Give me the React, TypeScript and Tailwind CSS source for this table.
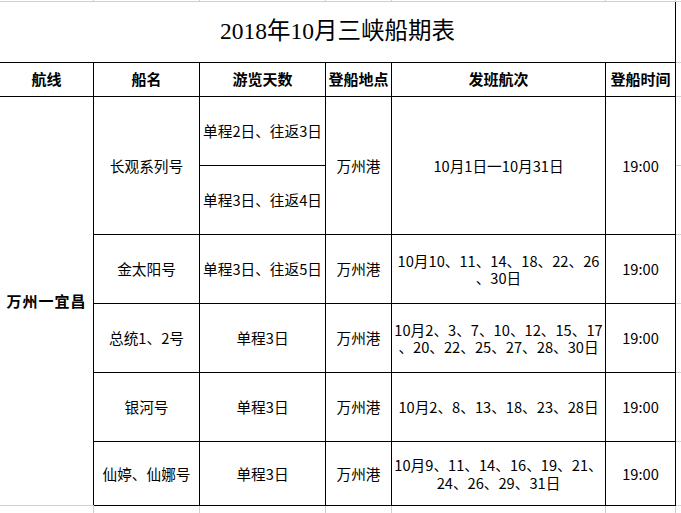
import React from "react";

const G = "border-[#d0d0d0]";
const body = "flex items-center justify-center text-center text-[14.67px] text-black whitespace-nowrap";
const cellB = "border-r border-b border-black";

function Lines({ lines }: { lines: string[] }) {
  return (
    <div className="flex flex-col items-center">
      {lines.map((l, i) => (
        <span key={i} className="block h-[17.5px] leading-[17.5px]">{l}</span>
      ))}
    </div>
  );
}

export default function App() {
  return (
    <div
      className="w-[681px] h-[513px] bg-white overflow-hidden"
      style={{ fontFamily: '"Noto Sans CJK SC", "Noto Sans", sans-serif' }}
    >
      <div className="grid grid-cols-[94px_106px_126px_66px_214px_70px_5px] grid-rows-[2px_61px_34px_69px_69px_69px_69px_69px_64px_7px]">
        {/* top strip */}
        <div className={`col-start-1 row-start-1 border-r border-b ${G}`} />
        <div className={`col-start-2 row-start-1 border-r border-b ${G}`} />
        <div className={`col-start-3 row-start-1 border-r border-b ${G}`} />
        <div className={`col-start-4 row-start-1 border-r border-b ${G}`} />
        <div className={`col-start-5 row-start-1 border-r border-b ${G}`} />
        <div className={`col-start-6 row-start-1 border-r border-b ${G}`} />
        <div className={`col-start-7 row-start-1 border-b ${G}`} />

        {/* title */}
        <div
          className={`col-start-1 col-span-6 row-start-2 ${cellB} flex items-center justify-center text-[23.5px] text-black`}
          style={{ fontFamily: '"Liberation Serif", "Noto Sans CJK SC", serif' }}
        >
          2018年10月三峡船期表
        </div>
        <div className={`col-start-7 row-start-2 border-b ${G}`} />

        {/* header */}
        {["航线", "船名", "游览天数", "登船地点", "发班航次", "登船时间"].map((h, i) => (
          <div
            key={h}
            className={`row-start-3 ${cellB} flex items-center justify-center text-[15px] font-bold text-black whitespace-nowrap`}
            style={{ gridColumnStart: i + 1 }}
          >
            {h}
          </div>
        ))}
        <div className={`col-start-7 row-start-3 border-b ${G}`} />

        {/* route merged */}
        <div
          className={`col-start-1 row-start-4 row-span-6 border-r border-black border-b-0 flex items-center justify-center text-[15px] font-bold tracking-[1px] text-black`}
        >
          万州一宜昌
        </div>

        {/* row 1 */}
        <div className={`col-start-2 row-start-4 row-span-2 ${cellB} ${body}`}>长观系列号</div>
        <div className={`col-start-3 row-start-4 ${cellB} ${body}`}>单程2日、往返3日</div>
        <div className={`col-start-3 row-start-5 ${cellB} ${body}`}>单程3日、往返4日</div>
        <div className={`col-start-4 row-start-4 row-span-2 ${cellB} ${body}`}>万州港</div>
        <div className={`col-start-5 row-start-4 row-span-2 ${cellB} ${body}`}>10月1日一10月31日</div>
        <div className={`col-start-6 row-start-4 row-span-2 ${cellB} ${body}`}>19:00</div>
        <div className={`col-start-7 row-start-4 border-b ${G}`} />
        <div className={`col-start-7 row-start-5 border-b ${G}`} />

        {/* row 2 */}
        <div className={`col-start-2 row-start-6 ${cellB} ${body}`}>金太阳号</div>
        <div className={`col-start-3 row-start-6 ${cellB} ${body}`}>单程3日、往返5日</div>
        <div className={`col-start-4 row-start-6 ${cellB} ${body}`}>万州港</div>
        <div className={`col-start-5 row-start-6 ${cellB} ${body}`}>
          <Lines lines={["10月10、11、14、18、22、26", "、30日"]} />
        </div>
        <div className={`col-start-6 row-start-6 ${cellB} ${body}`}>19:00</div>
        <div className={`col-start-7 row-start-6 border-b ${G}`} />

        {/* row 3 */}
        <div className={`col-start-2 row-start-7 ${cellB} ${body}`}>总统1、2号</div>
        <div className={`col-start-3 row-start-7 ${cellB} ${body}`}>单程3日</div>
        <div className={`col-start-4 row-start-7 ${cellB} ${body}`}>万州港</div>
        <div className={`col-start-5 row-start-7 ${cellB} ${body}`}>
          <Lines lines={["10月2、3、7、10、12、15、17", "、20、22、25、27、28、30日"]} />
        </div>
        <div className={`col-start-6 row-start-7 ${cellB} ${body}`}>19:00</div>
        <div className={`col-start-7 row-start-7 border-b ${G}`} />

        {/* row 4 */}
        <div className={`col-start-2 row-start-8 ${cellB} ${body}`}>银河号</div>
        <div className={`col-start-3 row-start-8 ${cellB} ${body}`}>单程3日</div>
        <div className={`col-start-4 row-start-8 ${cellB} ${body}`}>万州港</div>
        <div className={`col-start-5 row-start-8 ${cellB} ${body}`}>10月2、8、13、18、23、28日</div>
        <div className={`col-start-6 row-start-8 ${cellB} ${body}`}>19:00</div>
        <div className={`col-start-7 row-start-8 border-b ${G}`} />

        {/* row 5 */}
        <div className={`col-start-2 row-start-9 ${cellB} ${body}`}>仙婷、仙娜号</div>
        <div className={`col-start-3 row-start-9 ${cellB} ${body}`}>单程3日</div>
        <div className={`col-start-4 row-start-9 ${cellB} ${body}`}>万州港</div>
        <div className={`col-start-5 row-start-9 ${cellB} ${body}`}>
          <Lines lines={["10月9、11、14、16、19、21、", "24、26、29、31日"]} />
        </div>
        <div className={`col-start-6 row-start-9 ${cellB} ${body}`}>19:00</div>
        <div className={`col-start-7 row-start-9 border-b ${G}`} />

        {/* bottom strip; gray line under the merged route cell */}
        <div className={`col-start-1 row-start-10 border-t ${G} border-r -mt-px`} />
        <div className={`col-start-2 row-start-10 border-r ${G}`} />
        <div className={`col-start-3 row-start-10 border-r ${G}`} />
        <div className={`col-start-4 row-start-10 border-r ${G}`} />
        <div className={`col-start-5 row-start-10 border-r ${G}`} />
        <div className={`col-start-6 row-start-10 border-r ${G}`} />
      </div>
    </div>
  );
}
